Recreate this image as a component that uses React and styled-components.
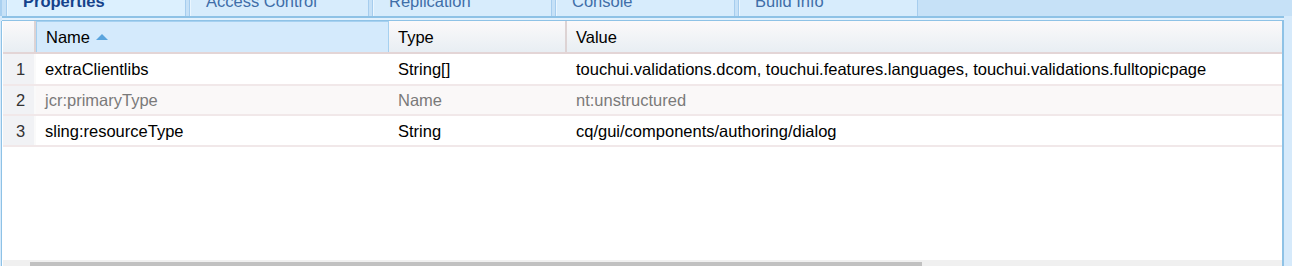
import React from "react";
import styled, { createGlobalStyle } from "styled-components";

const GlobalStyle = createGlobalStyle`
  html, body {
    margin: 0;
    padding: 0;
    background: #ffffff;
    overflow: hidden;
  }
  body {
    font-family: "Liberation Sans", Arial, sans-serif;
  }
`;

const Frame = styled.div`
  width: 1292px;
  height: 266px;
  display: flex;
  flex-direction: column;
  background: #d6eafb;
  overflow: hidden;
`;

const TabStrip = styled.div`
  height: 16px;
  flex: none;
  display: flex;
  align-items: flex-end;
  gap: 3px;
  padding-left: 4px;
  background: #c6e1f7;
  border-left: 2px solid #a9d0f0;
  overflow: hidden;
`;

const Tab = styled.div`
  flex: none;
  width: 180px;
  height: 30px;
  box-sizing: border-box;
  padding: 5px 0 0 16px;
  line-height: 18px;
  font-size: 16.5px;
  font-weight: ${p => (p.$active ? 700 : 400)};
  color: ${p => (p.$active ? "#15428b" : "#3f6ea8")};
  background: ${p => (p.$active ? "#dcf0fe" : "#d7ecfc")};
  border: 1px solid #a6cdee;
  border-bottom: none;
  box-shadow: inset 1px 0 0 #eaf6ff;
`;

const Separator = styled.div`
  height: 5px;
  flex: none;
  box-sizing: border-box;
  margin-left: 2px;
  margin-right: 8px;
  background: #e2f1fd;
  border-top: 2px solid #8ec2e6;
  border-bottom: 1px solid #8ec2e6;
`;

const Panel = styled.div`
  flex: 1;
  display: flex;
  flex-direction: column;
  margin-right: 8px;
  border-left: 1px solid #8ec2e6;
  border-right: 2px solid #8ec2e6;
  margin-left: 1px;
  background: #ffffff;
  padding-left: 1px;
`;

const Grid = styled.div`
  flex: 1;
  display: flex;
  flex-direction: column;
`;

const HeaderRow = styled.div`
  display: grid;
  grid-template-columns: 33px 353px 178px 1fr;
  height: 33px;
  box-sizing: border-box;
  background: linear-gradient(#fbf9fa, #e8eef3);
  border-bottom: 2px solid #e3d5d6;
`;

const HeaderCell = styled.div`
  display: flex;
  align-items: center;
  gap: 6px;
  padding: 1px 0 0 9px;
  font-size: 16.5px;
  color: #000;
  box-sizing: border-box;
  border-right: 2px solid #ddd3d4;
  ${p =>
    p.$sorted &&
    `
    background: #d4eafc;
    border: 1px solid #a5d0f0;
    border-bottom: none;
  `}
  &:last-child {
    border-right: none;
  }
`;

const SortArrow = styled.span`
  width: 0;
  height: 0;
  border-left: 6px solid transparent;
  border-right: 6px solid transparent;
  border-bottom: 6px solid #5aa4dd;
  margin-top: -2px;
`;

const Row = styled.div`
  display: grid;
  grid-template-columns: 33px 353px 178px 1fr;
  height: ${p => p.$h}px;
  box-sizing: border-box;
  border-bottom: 2px solid #f1e8e9;
  background: ${p => (p.$muted ? "#faf8f8" : "#ffffff")};
  color: ${p => (p.$muted ? "#7a7a7a" : "#000000")};
`;

const NumberCell = styled.div`
  display: flex;
  align-items: center;
  justify-content: center;
  padding: 1px 0 0 4px;
  font-size: 16.5px;
  color: #333;
  background: #f1f2f5;
  border-right: 2px solid #fafafa;
`;

const Cell = styled.div`
  display: flex;
  align-items: center;
  padding: 1px 0 0 9px;
  font-size: 16.5px;
  white-space: nowrap;
  overflow: hidden;
`;

const Filler = styled.div`
  flex: 1;
`;

const ScrollTrack = styled.div`
  height: 6px;
  flex: none;
  background: #f0f0f0;
  display: flex;
  align-items: flex-end;
  padding-left: 27px;
`;

const ScrollThumb = styled.div`
  width: 892px;
  height: 4px;
  background: #c1c1c1;
`;

const tabs = ["Properties", "Access Control", "Replication", "Console", "Build Info"];

const rows = [
  {
    name: "extraClientlibs",
    type: "String[]",
    value:
      "touchui.validations.dcom, touchui.features.languages, touchui.validations.fulltopicpage",
    h: 32
  },
  { name: "jcr:primaryType", type: "Name", value: "nt:unstructured", muted: true, h: 30 },
  {
    name: "sling:resourceType",
    type: "String",
    value: "cq/gui/components/authoring/dialog",
    h: 31
  }
];

export default function App() {
  return (
    <>
      <GlobalStyle />
      <Frame>
        <TabStrip>
          {tabs.map((t, i) => (
            <Tab key={t} $active={i === 0}>
              {t}
            </Tab>
          ))}
        </TabStrip>
        <Separator />
        <Panel>
          <Grid>
            <HeaderRow>
              <HeaderCell />
              <HeaderCell $sorted>
                Name <SortArrow />
              </HeaderCell>
              <HeaderCell>Type</HeaderCell>
              <HeaderCell>Value</HeaderCell>
            </HeaderRow>
            {rows.map((r, i) => (
              <Row key={r.name} $muted={r.muted} $h={r.h}>
                <NumberCell>{i + 1}</NumberCell>
                <Cell>{r.name}</Cell>
                <Cell>{r.type}</Cell>
                <Cell>{r.value}</Cell>
              </Row>
            ))}
            <Filler />
          </Grid>
          <ScrollTrack>
            <ScrollThumb />
          </ScrollTrack>
        </Panel>
      </Frame>
    </>
  );
}
